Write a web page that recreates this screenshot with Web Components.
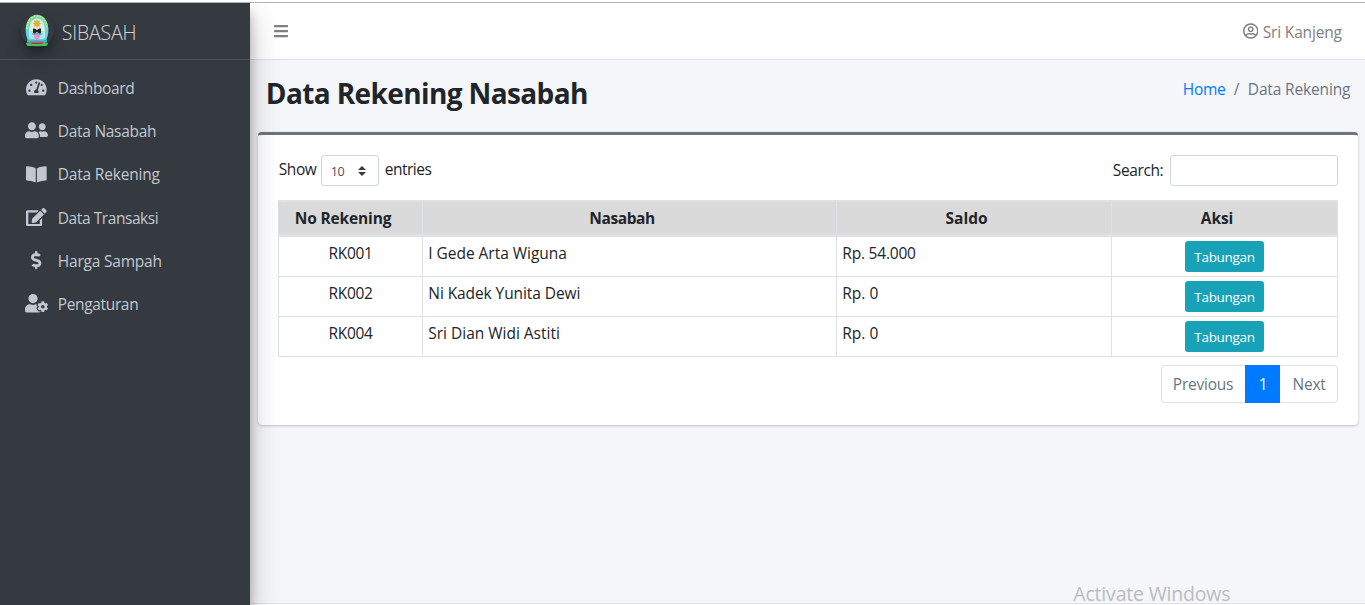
<!DOCTYPE html>
<html lang="id">
<head>
<meta charset="utf-8">
<title>SIBASAH - Data Rekening</title>
<style>
html,body{margin:0;height:100%;overflow:hidden}
body{font:15.5px/24px "Open Sans","Noto Sans",sans-serif;color:#212529;background:#fff}
</style>
</head>
<body>
<app-shell></app-shell>
<script>
const define = (name, html, setup) => customElements.define(name, class extends HTMLElement {
  connectedCallback() {
    if (this.shadowRoot) return;
    const t = document.createElement('template');
    t.innerHTML = typeof html === 'function' ? html(this) : html;
    this.attachShadow({mode: 'open'}).append(t.content.cloneNode(true));
    if (setup) setup(this);
  }
});

/* Text run whose tracking is adjusted to fill the width in "w". */
define('fit-text', `<style>:host{display:inline-block;white-space:nowrap;text-align:left;text-indent:.8px;flex:none}</style><span><slot></slot></span>`, el => {
  const span = el.shadowRoot.querySelector('span');
  const w = +el.getAttribute('w');
  const n = el.textContent.length;
  span.style.letterSpacing = ((w - 1.5 - span.getBoundingClientRect().width) / n).toFixed(3) + 'px';
  el.style.width = w + 'px';
});

const ICONS = {
  dash: [576, 'M288 32C128.94 32 0 160.94 0 320c0 52.8 14.25 102.26 39.06 144.8 5.61 9.62 16.3 15.2 27.44 15.2h443c11.14 0 21.83-5.58 27.44-15.2C561.75 422.26 576 372.8 576 320c0-159.06-128.94-288-288-288zm0 64c14.71 0 26.58 10.13 30.32 23.65-1.11 2.26-2.64 4.23-3.45 6.67l-9.22 27.67c-5.13 3.49-10.97 6.01-17.64 6.01-17.67 0-32-14.33-32-32S270.33 96 288 96zM96 384c-17.67 0-32-14.33-32-32s14.33-32 32-32 32 14.33 32 32-14.33 32-32 32zm48-160c-17.67 0-32-14.33-32-32s14.33-32 32-32 32 14.33 32 32-14.33 32-32 32zm246.77-72.41l-61.33 184C343.13 347.33 352 364.54 352 384c0 11.72-3.38 22.55-8.88 32H232.88c-5.5-9.45-8.88-20.28-8.88-32 0-33.94 26.5-61.43 59.9-63.59l61.34-184.01c4.17-12.56 17.73-19.45 30.36-15.17 12.57 4.19 19.35 17.79 15.17 30.36zm14.66 57.2l15.52-46.55c3.47-1.29 7.13-2.23 11.05-2.23 17.67 0 32 14.33 32 32s-14.33 32-32 32c-11.38-.01-20.89-6.28-26.57-15.22zM480 384c-17.67 0-32-14.33-32-32s14.33-32 32-32 32 14.33 32 32-14.33 32-32 32z'],
  friends: [640, 'M192 256c61.9 0 112-50.1 112-112S253.9 32 192 32 80 82.1 80 144s50.1 112 112 112zm76.8 32h-8.3c-20.8 10-43.9 16-68.5 16s-47.6-6-68.5-16h-8.3C51.6 288 0 339.6 0 403.2V432c0 26.5 21.5 48 48 48h288c26.5 0 48-21.5 48-48v-28.8c0-63.6-51.6-115.2-115.2-115.2zM480 256c53 0 96-43 96-96s-43-96-96-96-96 43-96 96 43 96 96 96zm48 32h-3.8c-13.9 4.8-28.6 8-44.2 8s-30.3-3.2-44.2-8H432c-20.4 0-39.2 5.9-55.7 15.4 24.4 26.3 39.7 61.2 39.7 99.8v38.4c0 2.2-.5 4.3-.6 6.4H592c26.5 0 48-21.5 48-48 0-61.9-50.1-112-112-112z'],
  book: [576, 'M542.22 32.05c-54.8 3.11-163.72 14.43-230.96 55.59-4.64 2.84-7.27 7.89-7.27 13.17v363.87c0 11.55 12.63 18.85 23.28 13.49 69.18-34.82 169.23-44.32 218.7-46.92 16.89-.89 30.02-14.43 30.02-30.66V62.75c.01-17.71-15.35-31.74-33.77-30.7zM264.73 87.64C197.5 46.48 88.58 35.17 33.78 32.05 15.36 31.01 0 45.04 0 62.75V400.6c0 16.24 13.13 29.78 30.02 30.66 49.49 2.6 149.59 12.11 218.77 46.95 10.62 5.35 23.21-1.94 23.21-13.46V100.63c0-5.29-2.62-10.14-7.27-12.99z'],
  edit: [576, 'M402.6 83.2l90.2 90.2c3.8 3.8 3.8 10 0 13.8L274.4 405.6l-92.8 10.3c-12.4 1.4-22.9-9.1-21.5-21.5l10.3-92.8L388.8 83.2c3.8-3.8 10-3.8 13.8 0zm162-22.9l-48.8-48.8c-15.2-15.2-39.9-15.2-55.2 0l-35.4 35.4c-3.8 3.8-3.8 10 0 13.8l90.2 90.2c3.8 3.8 10 3.8 13.8 0l35.4-35.4c15.2-15.3 15.2-40 0-55.2zM384 346.2V448H64V128h229.8c3.2 0 6.2-1.3 8.5-3.5l40-40c7.6-7.6 2.2-20.5-8.5-20.5H48C21.5 64 0 85.5 0 112v352c0 26.5 21.5 48 48 48h352c26.5 0 48-21.5 48-48V306.2c0-10.7-12.9-16-20.5-8.5l-40 40c-2.2 2.3-3.5 5.3-3.5 8.5z'],
  dollar: [288, 'M209.2 233.4l-108-31.6C88.7 198.2 80 186.5 80 173.5c0-16.3 13.2-29.5 29.5-29.5h66.3c12.2 0 24.2 3.7 34.2 10.5 6.1 4.1 14.3 3.1 19.5-2l34.8-34c7.1-6.9 6.1-18.4-1.8-24.5C238 74.8 207.4 64.1 176 64V16c0-8.8-7.2-16-16-16h-32c-8.8 0-16 7.2-16 16v48h-2.5C45.8 64-5.4 118.7.5 183.6c4.2 46.1 39.4 83.6 83.8 96.6l102.5 30c12.5 3.7 21.2 15.3 21.2 28.3 0 16.3-13.2 29.5-29.5 29.5h-66.3C100 368 88 364.3 78 357.5c-6.1-4.1-14.3-3.1-19.5 2l-34.8 34c-7.1 6.9-6.1 18.4 1.8 24.5 24.5 19.2 55.1 29.9 86.5 30v48c0 8.8 7.2 16 16 16h32c8.8 0 16-7.2 16-16v-48.2c46.6-.9 90.3-28.6 105.7-72.7 21.5-61.6-14.6-124.8-72.5-141.7z'],
  cog: [640, 'M610.5 373.3c2.6-14.1 2.6-28.5 0-42.6l25.8-14.9c3-1.7 4.3-5.2 3.3-8.5-6.7-21.6-18.2-41.2-33.2-57.4-2.3-2.5-6-3.1-9-1.4l-25.8 14.9c-10.9-9.3-23.4-16.5-36.9-21.3v-29.8c0-3.4-2.4-6.4-5.7-7.1-22.3-5-45-4.8-66.2 0-3.3.7-5.7 3.7-5.7 7.1v29.8c-13.5 4.8-26 12-36.9 21.3l-25.8-14.9c-2.9-1.7-6.7-1.1-9 1.4-15 16.2-26.5 35.8-33.2 57.4-1 3.3.4 6.8 3.3 8.5l25.8 14.9c-2.6 14.1-2.6 28.5 0 42.6l-25.8 14.9c-3 1.7-4.3 5.2-3.3 8.5 6.7 21.6 18.2 41.1 33.2 57.4 2.3 2.5 6 3.1 9 1.4l25.8-14.9c10.9 9.3 23.4 16.5 36.9 21.3v29.8c0 3.4 2.4 6.4 5.7 7.1 22.3 5 45 4.8 66.2 0 3.3-.7 5.7-3.7 5.7-7.1v-29.8c13.5-4.8 26-12 36.9-21.3l25.8 14.9c2.9 1.7 6.7 1.1 9-1.4 15-16.2 26.5-35.8 33.2-57.4 1-3.3-.4-6.8-3.3-8.5l-25.8-14.9zM496 400.5c-26.8 0-48.5-21.8-48.5-48.5s21.8-48.5 48.5-48.5 48.5 21.8 48.5 48.5-21.7 48.5-48.5 48.5zM224 256c70.7 0 128-57.3 128-128S294.7 0 224 0 96 57.3 96 128s57.3 128 128 128zm201.2 226.5c-2.3-1.2-4.6-2.6-6.8-3.9l-7.9 4.6c-6 3.4-12.8 5.3-19.6 5.3-10.9 0-21.4-4.6-28.9-12.6-18.3-19.8-32.3-43.9-40.2-69.6-5.5-17.7 1.9-36.4 17.9-45.7l7.9-4.6c-.1-2.6-.1-5.2 0-7.8l-7.9-4.6c-16-9.2-23.4-28-17.9-45.7.9-2.9 2.2-5.8 3.2-8.7-3.8-.3-7.5-1.2-11.4-1.2h-16.7c-22.2 10.2-46.9 16-72.9 16s-50.6-5.8-72.9-16h-16.7C60.2 288 0 348.2 0 422.4V464c0 26.5 21.5 48 48 48h352c10.1 0 19.5-3.2 27.2-8.5-1.2-3.8-2-7.7-2-11.8v-9.2z'],
  bars: [448, 'M16 132h416c8.8 0 16-7.2 16-16V76c0-8.8-7.2-16-16-16H16C7.2 60 0 67.2 0 76v40c0 8.8 7.2 16 16 16zm0 160h416c8.8 0 16-7.2 16-16v-40c0-8.8-7.2-16-16-16H16c-8.8 0-16 7.2-16 16v40c0 8.8 7.2 16 16 16zm0 160h416c8.8 0 16-7.2 16-16v-40c0-8.8-7.2-16-16-16H16c-8.8 0-16 7.2-16 16v40c0 8.8 7.2 16 16 16z'],
  user: [496, 'M248 104c-53 0-96 43-96 96s43 96 96 96 96-43 96-96-43-96-96-96zm0 144c-26.5 0-48-21.5-48-48s21.5-48 48-48 48 21.5 48 48-21.5 48-48 48zm0-240C111 8 0 119 0 256s111 248 248 248 248-111 248-248S385 8 248 8zm0 448c-49.7 0-95.1-18.3-130.1-48.4 14.9-23 40.4-38.6 69.6-39.5 20.8 6.4 40.6 9.6 60.5 9.6s39.7-3.1 60.5-9.6c29.2 1 54.7 16.5 69.6 39.5-35 30.1-80.4 48.4-130.1 48.4zm162.7-84.1c-24.4-31.4-62.1-51.9-105.1-51.9-10.2 0-26 9.6-57.6 9.6-31.5 0-47.4-9.6-57.6-9.6-42.9 0-80.6 20.5-105.1 51.9C61.9 339.2 48 299.2 48 256c0-110.3 89.7-200 200-200s200 89.7 200 200c0 43.2-13.9 83.2-37.3 115.9z']
};
define('ui-icon', el => {
  const [w, d] = ICONS[el.getAttribute('name')];
  const s = +el.getAttribute('size');
  return `<style>:host{display:inline-flex;flex:none}svg{display:block;fill:currentColor}</style>
  <svg viewBox="0 0 ${w} 512" width="${(s * w / 512).toFixed(2)}" height="${s}"><path d="${d}"/></svg>`;
});

define('brand-logo', `<style>:host{display:flex;width:33px;height:33px;border-radius:50%;justify-content:center;box-shadow:0 10px 20px rgba(0,0,0,.19),0 6px 6px rgba(0,0,0,.23)}svg{display:block}</style>
<svg width="24" height="33" viewBox="0 0 24 33">
<path d="M3.500 28C-.500 19 0 12 3 7 7-.500 17-.500 21 7c3 5 3.500 12-.500 21z" fill="#62d5e4"/>
<path d="M2 15C2.500 6 7 2 12 2s9.500 4 10 13" fill="none" stroke="#8fdc7a" stroke-width="2.400"/>
<path d="M2 15C2.500 6 7 2 12 2s9.500 4 10 13" fill="none" stroke="#e0f6cf" stroke-width="1.200" stroke-dasharray="1.200 1.800"/>
<path d="M4.500 24C3 14 5 4.500 12 4.500S21 14 19.500 24" fill="#e4eedb"/>
<path d="M4.500 17h15l-1 8h-13z" fill="#a5e6ee"/>
<path d="M12 5l1 2 2.200-.700-.700 2.200 2 1-2 1 .700 2.200-2.200-.700-1 2-1-2-2.200.700.700-2.200-2-1 2-1-.700-2.200 2.200.700z" fill="#d9b43a"/>
<path d="M8 14.500l1.500 0 2.500 1.500 2.500-1.500H16v4.500l-1.500.500L12 18l-2.500 1.500L8 19z" fill="#20231f"/>
<path d="M7.500 20h9" stroke="#403c35" stroke-width=".800"/>
<path d="M12 26c-3-2-3.500-4-2.500-5.500h5C15.500 22 15 24 12 26z" fill="#e58be6"/>
<path d="M2.500 25c3 2 4 1 9.500 1s6.500 1 9.500-1l.500 3H2z" fill="#3fb9cf"/>
<path d="M5.500 27.500h13l1 2h-15z" fill="#d9506f"/>
<path d="M.800 29l4-1 2 2h10.400l2-2 4 1-1.600 3H2.400z" fill="#3cc955"/>
</svg>`);

define('nav-item', el => `<style>:host{display:flex;height:40px;margin-bottom:3.2px;align-items:center;color:#c2c7d0}
.i{width:26px;display:flex;justify-content:center;margin:0 7.4px 1.2px 23.600px}</style>
<span class="i"><ui-icon name="${el.getAttribute('icon')}" size="18.4"></ui-icon></span><slot></slot>`);

define('side-bar', `<style>:host{display:block;width:250px;flex:none;background:#343a40;position:relative;z-index:2;box-shadow:0 14px 28px rgba(0,0,0,.25),0 10px 10px rgba(0,0,0,.22)}
.brand{display:flex;align-items:center;height:56px;border-bottom:1px solid #4b545c;padding-left:20.500px;font-size:19.5px;font-weight:300;color:rgba(255,255,255,.8)}
.brand fit-text{margin:3px 0 0 7.500px}brand-logo{margin-top:-2px}nav{padding-top:8px}</style>
<div class="brand"><brand-logo></brand-logo><fit-text w="76">SIBASAH</fit-text></div>
<nav>
<nav-item icon="dash"><fit-text w="78">Dashboard</fit-text></nav-item>
<nav-item icon="friends"><fit-text w="100">Data Nasabah</fit-text></nav-item>
<nav-item icon="book"><fit-text w="103.5">Data Rekening</fit-text></nav-item>
<nav-item icon="edit"><fit-text w="102">Data Transaksi</fit-text></nav-item>
<nav-item icon="dollar"><fit-text w="105.5">Harga Sampah</fit-text></nav-item>
<nav-item icon="cog"><fit-text w="82">Pengaturan</fit-text></nav-item>
</nav>`);

define('top-bar', `<style>:host{display:flex;height:56px;background:#fff;border-bottom:1px solid #dee2e6;align-items:center;justify-content:space-between;padding:0 22.500px 0 24px;color:#808080}
.u{display:flex;align-items:center;gap:4px}.u fit-text{margin-top:1px}</style>
<ui-icon name="bars" size="16"></ui-icon><span class="u"><ui-icon name="user" size="16"></ui-icon><fit-text w="80.5">Sri Kanjeng</fit-text></span>`);

define('page-head', `<style>:host{display:flex;justify-content:space-between;padding:14px 14px 0 15px;height:58px}
h1{margin:0;font-size:28px;line-height:38px;font-weight:700}
.b{display:flex;margin-top:3px;color:#6c757d}.b a{color:#007bff}.s{margin:0 8px 0 7px}</style>
<h1><fit-text w="323.5">Data Rekening Nasabah</fit-text></h1>
<div class="b"><a><fit-text w="44">Home</fit-text></a><fit-text class="s" w="6">/</fit-text><fit-text w="104">Data Rekening</fit-text></div>`);

define('table-tools', `<style>:host{display:flex;justify-content:space-between;height:31px;line-height:30px}
div{display:flex}.len{line-height:28px}.sel,.inp{box-sizing:border-box;height:31px;border:1px solid #ced4da;border-radius:3.2px;background:#fff}
.sel{width:58px;margin:0 5px 0 4px;padding:2px 12px 0 8px;display:flex;justify-content:space-between;align-items:center;font-size:12.5px;color:#495057}
.sel svg{margin-top:-1px}.inp{width:168px;margin-left:6px}</style>
<div class="len"><fit-text w="39">Show</fit-text><span class="sel"><fit-text w="15">10</fit-text><svg width="8" height="10" viewBox="0 0 8 10"><path d="M0 4l4-4 4 4zM0 6l4 4 4-4z" fill="#343a40"/></svg></span><fit-text w="48">entries</fit-text></div>
<div><fit-text w="52">Search:</fit-text><span class="inp"></span></div>`);

define('ui-button', `<style>:host{display:flex;width:79px;height:31px;border-radius:3.2px;background:#17a2b8;color:#fff;font-size:13.5px;line-height:33px;justify-content:center}</style><slot></slot>`);

define('data-table', () => {
  const rows = [['RK001', 'I Gede Arta Wiguna', 140, 'Rp. 54.000', 75], ['RK002', 'Ni Kadek Yunita Dewi', 153.5, 'Rp. 0', 37.5], ['RK004', 'Sri Dian Widi Astiti', 133, 'Rp. 0', 37.5]];
  return `<style>:host{display:grid;grid-template-columns:143px 413px 274px 225px;grid-template-rows:32px 1px repeat(3,39px);gap:1px;background:#dee2e6;padding:2px 1px 1px;margin-top:14px}
  .h{background:#dadada;font-weight:700;display:flex;justify-content:center;line-height:32px;padding-right:15px}
  .c{background:#fff;display:flex;line-height:33px;padding-left:4.500px}.n{padding:0;justify-content:center}
  .act{align-items:center}
  .rule{grid-column:1/-1;height:1px}
  </style>
  <div class="h"><fit-text w="98">No Rekening</fit-text></div><div class="h"><fit-text w="67">Nasabah</fit-text></div><div class="h"><fit-text w="43.5">Saldo</fit-text></div><div class="h"><fit-text w="34">Aksi</fit-text></div><div class="rule"></div>` +
  rows.map(r => `<div class="c n"><fit-text w="45.5">${r[0]}</fit-text></div><div class="c"><fit-text w="${r[2]}">${r[1]}</fit-text></div><div class="c"><fit-text w="${r[4]}">${r[3]}</fit-text></div><div class="c n act"><ui-button><fit-text w="62">Tabungan</fit-text></ui-button></div>`).join('');
});

define('page-nav', `<style>:host{display:flex;align-self:flex-end;margin-top:8px;height:38px;box-sizing:border-box;color:#6c757d;line-height:39px;border-radius:4px;box-shadow:inset 0 0 0 1px #dee2e6}
span{display:flex;justify-content:center}.p{width:84px}.a{width:35px;background:#007bff;color:#fff}.n{width:58px}</style>
<span class="p"><fit-text w="62">Previous</fit-text></span><span class="a"><fit-text w="9">1</fit-text></span><span class="n"><fit-text w="34.5">Next</fit-text></span>`);

define('data-card', `<style>:host{display:flex;flex-direction:column;box-sizing:border-box;height:293px;margin:0 7px 0 8px;background:#fff;border-top:3px solid #6c757d;border-radius:4px;padding:20px 20px;box-shadow:0 0 1px rgba(0,0,0,.125),0 1px 3px rgba(0,0,0,.2)}</style><slot></slot>`);

define('app-shell', `<style>:host{display:flex;flex-direction:column;height:100vh}
.line{height:1px;margin-top:2px;background:#b2b2b2;flex:none}
.app{display:flex;flex:1;min-height:0;overflow:hidden}
main{flex:1;display:flex;flex-direction:column;background:#f4f6f9}
.wm{margin:auto 134px 0 0;align-self:flex-end;font-size:19.5px;line-height:20px;height:19px;color:#bbbcbe}
footer{height:1px;border-top:1px solid #dee2e6;background:#fff}</style>
<div class="line"></div>
<div class="app"><side-bar></side-bar><main><top-bar></top-bar><page-head></page-head>
<data-card><table-tools></table-tools><data-table></data-table><page-nav></page-nav></data-card>
<div class="wm"><fit-text w="158.5">Activate Windows</fit-text></div><footer></footer></main></div>`);
</script>
</body>
</html>
